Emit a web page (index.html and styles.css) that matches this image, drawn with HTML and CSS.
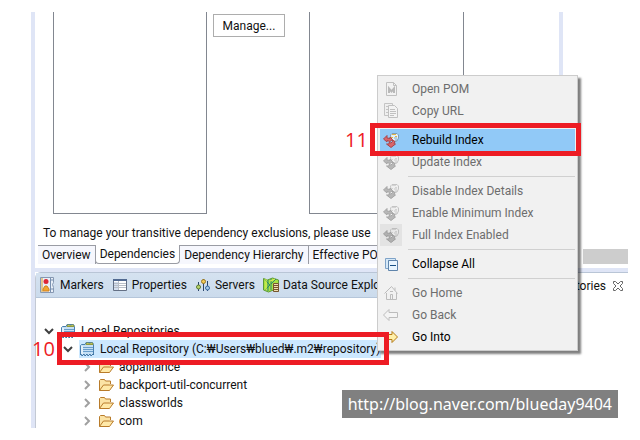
FILE: index.html
```html
<!DOCTYPE html>
<html lang="en">
<head>
    <meta charset="UTF-8">
    <meta name="viewport" content="width=device-width, initial-scale=1.0">
    <title>Maven Repositories</title>
    <link rel="stylesheet" href="styles.css">
</head>
<body>
    <!-- Shared icons -->
    <svg class="icon-defs" aria-hidden="true">
        <symbol id="icon-down" viewBox="0 0 10 16">
            <path d="M1 6l4 4 4-4" fill="none" stroke="#404040" stroke-width="2"/>
        </symbol>
        <symbol id="icon-right" viewBox="0 0 10 16">
            <path d="M3 4l4 4-4 4" fill="none" stroke="#a0a0a0" stroke-width="2"/>
        </symbol>
        <symbol id="icon-repo" viewBox="0 0 16 16">
            <path d="M1.500 13.500V4.500l1-1h3.500l1-2h6.500l1 2v10" fill="#c5e0f5" stroke="#4a7fae"/>
            <path d="M1 14l1-1 1 2 2-2 1 2 2-2 1 2 2-2 1 2 2-2 1 1" fill="none" stroke="#3f75a5"/>
            <path d="M7 3.500l.5-1.500h2l1 1 1-1h2l.5 1.500z" fill="#f4e88b" stroke="#8d9a3c"/>
            <path d="M4 6.500h10M4 8.500h10M4 10.500h10" stroke="#6a9ecb"/>
            <path d="M3 5v8" stroke="#fff"/>
        </symbol>
        <symbol id="icon-folder" viewBox="0 0 16 16">
            <path d="M1.500 13.500v-10l1-1h4l1 1.500h5v3" fill="#fbe3a5" stroke="#b87b2a"/>
            <path d="M1.500 13.500l4-5.500h10l-4 5.500z" fill="#ffe9a8" stroke="#b87b2a"/>
        </symbol>
        <symbol id="icon-index" viewBox="0 0 16 16">
            <path d="M7.500 3l1.500-1.500h5l1.500 1.500v3l-1.500 3-3 .5-3-2z" fill="#e4f0f8" stroke="#7f9db5"/>
            <path d="M9 2.500h4M8 5.500h2M12 4.500h2" stroke="#dfb649"/>
            <path d="M11 6h3M12 8h2" stroke="#7fa6c8"/>
            <path d="M.5 7L4 3.500V6l3 .5V5l2.500 2.500L7 9.500 4 8.500V10z" fill="#d9656a" stroke="#a8454c"/>
            <path d="M3.500 12H6v-1.500l2 .5 1.500-1.500V8L12 9.500l-1 2.500h1.500L8 15.500z" fill="#d9656a" stroke="#a8454c"/>
        </symbol>
    </svg>

    <main class="workbench">
        <section class="editor">
            <div class="editor-page">
                <div class="lists">
                    <div class="list-box"></div>
                    <button class="manage-btn" type="button">Manage...</button>
                    <div class="list-box"></div>
                </div>
                <p class="message">To manage your transitive dependency exclusions, please use</p>
                <nav class="page-tabs">
                    <button type="button">Overview</button>
                    <button type="button" class="selected">Dependencies</button>
                    <button type="button">Dependency Hierarchy</button>
                    <button type="button">Effective POM</button>
                </nav>
            </div>
            <div class="outline">
                <div class="scroll-thumb"></div>
            </div>
        </section>

        <section class="view">
            <div class="view-tabs">
                <button type="button" class="view-tab">
                    <svg class="icon" viewBox="0 0 16 16">
                        <path d="M.5.5h13v5l-1 2 1 3v5h-13z" fill="#e8eff8" stroke="#8698b2"/>
                        <path d="M1 1h2v14H1z" fill="#e2c98f"/>
                        <path d="M10.500 1v14M11 3h2M11 12h2" stroke="#7890b0"/>
                        <circle cx="6" cy="4.500" r="2.500" fill="#dd2635"/>
                        <path d="M3 14v-2l2-3h2l2 3v2z" fill="#f3a62c" stroke="#d08222"/>
                    </svg>
                    Markers
                </button>
                <button type="button" class="view-tab">
                    <svg class="icon" viewBox="0 0 16 16">
                        <path d="M1.500 2.500h13v11h-13z" fill="#fff" stroke="#647085"/>
                        <path d="M1 2h14v2h-14z" fill="#526a91"/>
                        <path d="M2 5h4v8h-4z" fill="#d4dfef"/>
                        <path d="M6.500 4v9M2 6.500h12M2 8.500h12M2 10.500h12" stroke="#b9bfc8"/>
                    </svg>
                    Properties
                </button>
                <button type="button" class="view-tab">
                    <svg class="icon" viewBox="0 0 16 16">
                        <path d="M3.500 5v9M8.500 2v12M12.500 4v10" stroke="#2c466b"/>
                        <circle cx="3.500" cy="10" r="2" fill="#b9d56c" stroke="#5a7a31"/>
                        <circle cx="8.500" cy="4.500" r="2" fill="#f2cc58" stroke="#9b7620"/>
                        <circle cx="12.500" cy="11" r="2" fill="#a8cbea" stroke="#3769a1"/>
                    </svg>
                    Servers
                </button>
                <button type="button" class="view-tab">
                    <svg class="icon" viewBox="0 0 16 16">
                        <path d="M.5 1.500l4 1.500 5-2 6 2v11l-5-1-5 2-5-2z" fill="#a8e244" stroke="#5c983a"/>
                        <path d="M2 3l5 5-5 5M5 3v11M8 2v11M13 2L8 7" fill="none" stroke="#2c8b69"/>
                        <path d="M3 2v11M7 4l5-2" stroke="#dff153"/>
                        <path d="M10.500 6.500h5v8h-5z" fill="#f0dfb2" stroke="#76552e"/>
                        <path d="M11 8.500h4M11 10.500h4M11 12.500h4" stroke="#76552e"/>
                    </svg>
                    Data Source Explorer
                </button>
                <button type="button" class="view-tab active">
                    <span>Maven Repositories</span>
                    <svg class="close" viewBox="0 0 12 12">
                        <path d="M1.500 1.500h2l2.500 2.500 2.500-2.500h2v2l-2.500 2.500 2.500 2.500v2h-2l-2.500-2.500-2.500 2.500h-2v-2l2.500-2.500-2.500-2.500z" fill="#fff" stroke="#666"/>
                    </svg>
                </button>
            </div>

            <ul class="tree">
                <li>
                    <div class="row"><svg class="twisty"><use href="#icon-down"/></svg><svg class="icon"><use href="#icon-repo"/></svg><span>Local Repositories</span></div>
                    <ul>
                        <li>
                            <div class="row selected"><svg class="twisty"><use href="#icon-down"/></svg><svg class="icon"><use href="#icon-repo"/></svg><span>Local Repository (C:₩Users₩blued₩.m2₩repository)</span></div>
                            <ul>
                                <li class="row"><svg class="twisty"><use href="#icon-right"/></svg><svg class="icon"><use href="#icon-folder"/></svg><span>aopalliance</span></li>
                                <li class="row"><svg class="twisty"><use href="#icon-right"/></svg><svg class="icon"><use href="#icon-folder"/></svg><span>backport-util-concurrent</span></li>
                                <li class="row"><svg class="twisty"><use href="#icon-right"/></svg><svg class="icon"><use href="#icon-folder"/></svg><span>classworlds</span></li>
                                <li class="row"><svg class="twisty"><use href="#icon-right"/></svg><svg class="icon"><use href="#icon-folder"/></svg><span>com</span></li>
                            </ul>
                        </li>
                    </ul>
                </li>
            </ul>
        </section>
    </main>

    <!-- Context menu -->
    <div class="context-menu">
        <button type="button" disabled>
            <svg class="icon" viewBox="0 0 16 16">
                <path d="M3.500 1.500h7l3 3v10h-10z" fill="#f4f4f4" stroke="#909090"/>
                <path d="M10.500 1.500v3h3" fill="none" stroke="#909090"/>
                <path d="M6 12V7.500l2.500 3 2.500-3V12" fill="none" stroke="#808080" stroke-width="2"/>
            </svg>
            Open POM
        </button>
        <button type="button" disabled>
            <svg class="icon" viewBox="0 0 16 16">
                <path d="M1.500.5h8v12h-8z" fill="#eee" stroke="#999"/>
                <path d="M3 3.500h2M3 6.500h2M3 9.500h2" stroke="#999"/>
                <path d="M5.500 2.500h6l3 3v9h-9z" fill="#f5f5f5" stroke="#909090"/>
                <path d="M7 6.500h5M7 8.500h6M7 10.500h6M7 12.500h4" stroke="#909090"/>
            </svg>
            Copy URL
        </button>
        <hr>
        <button type="button" class="highlight"><svg class="icon"><use href="#icon-index"/></svg>Rebuild Index</button>
        <button type="button" disabled><svg class="icon"><use href="#icon-index"/></svg>Update Index</button>
        <hr>
        <button type="button" disabled><svg class="icon"><use href="#icon-index"/></svg>Disable Index Details</button>
        <button type="button" disabled><svg class="icon"><use href="#icon-index"/></svg>Enable Minimum Index</button>
        <button type="button" class="checked" disabled><svg class="icon"><use href="#icon-index"/></svg>Full Index Enabled</button>
        <hr>
        <button type="button">
            <svg class="icon" viewBox="0 0 16 16">
                <path d="M2.500 12.500v-10h10v2h-7v8z" fill="#d6e9f8" stroke="#7fa3c8"/>
                <path d="M5.500 4.500h9v10h-9z" fill="#e8f5ff" stroke="#5f84ab"/>
                <path d="M7 9.500h6" stroke="#174f85"/>
            </svg>
            Collapse All
        </button>
        <hr>
        <button type="button" disabled>
            <svg class="icon" viewBox="0 0 16 16">
                <path d="M3.500 8v6.500h10V8M1.500 8.500L8.500 1.500l6 7" fill="#f2f2f2" stroke="#888"/>
                <path d="M12 2.500v3M7.500 14V9.500h2V14M7 6.500h3" fill="none" stroke="#888"/>
            </svg>
            Go Home
        </button>
        <button type="button" disabled>
            <svg class="icon" viewBox="0 0 16 16">
                <path d="M.5 8L6 2.500v3h8.500v5H6v3z" fill="#f7f7f7" stroke="#888"/>
            </svg>
            Go Back
        </button>
        <button type="button">
            <svg class="icon" viewBox="0 0 16 16">
                <path d="M14.500 8L9 2.500v3H1.500v5H9v3z" fill="#fff0aa" stroke="#b57b15"/>
            </svg>
            Go Into
        </button>
    </div>

    <!-- Step callouts -->
    <div class="frame frame-10"></div>
    <span class="step step-10">10</span>
    <div class="frame frame-11"></div>
    <span class="step step-11">11</span>

    <a class="watermark" href="#">http://blog.naver.com/blueday9404</a>
</body>
</html>
```

FILE: styles.css
```css
* {
    box-sizing: border-box;
}

body {
    position: relative;
    margin: 0;
    padding: 12px 12px 12px 31px;
    background: #fff;
    color: #111;
    font-family: Roboto, "Noto Sans CJK KR", sans-serif;
    font-size: 12px;
    line-height: 18px;
}

button {
    margin: 0;
    padding: 0;
    border: none;
    background: none;
    color: inherit;
    font: inherit;
    text-align: left;
    white-space: nowrap;
}

ul {
    margin: 0;
    padding: 0;
    list-style: none;
}

.icon-defs {
    position: absolute;
    width: 0;
    height: 0;
}

.icon {
    flex: none;
    width: 16px;
    height: 16px;
}

.workbench {
    border-left: 4px solid #dfe5f6;
    overflow: hidden;
}

/* Editor */
.editor {
    display: flex;
    border-bottom: 4px solid #dfe5f6;
}

.editor-page {
    flex: none;
    width: 528px;
    padding-bottom: 4px;
    border-right: 4px solid #dfe5f6;
}

.lists {
    display: grid;
    grid-template-columns: 154px 102px 155px;
    align-items: start;
    padding-left: 18px;
}

.list-box {
    height: 202px;
    border: 1px solid #828790;
    border-top: none;
}

.manage-btn {
    width: 72px;
    height: 23px;
    margin: 2px 0 0 6px;
    border: 1px solid #adadad;
    text-align: center;
}

.message {
    margin: 10px 0 3px;
    padding-left: 8px;
}

.page-tabs {
    display: flex;
    margin-left: 3px;
    border-top: 1px solid #9a9ca4;
    background: #f6f7fd;
}

.page-tabs button {
    height: 18px;
    padding: 0 4px;
    border-right: 1px solid #9a9ca4;
}

.page-tabs .selected {
    margin: -1px 0 0 -1px;
    height: 19px;
    border: 1px solid #9a9ca4;
    border-top: none;
    border-radius: 0 0 4px 4px;
    background: #fff;
}

.outline {
    display: flex;
    flex: 1;
    align-items: flex-end;
    padding: 0 0 4px 20px;
}

.scroll-thumb {
    flex: 1;
    height: 15px;
    background: #cdcdcd;
}

/* Bottom view */
.view {
    border-top: 1px solid #b9c5d6;
    border-left: 1px solid #c3c9d4;
    border-top-left-radius: 6px;
}

.view-tabs {
    display: flex;
    height: 25px;
    border-bottom: 1px solid #b5c6da;
    background: linear-gradient(#d5e2f0, #cbdbec);
}

.view-tab {
    display: flex;
    align-items: center;
    gap: 4px;
    padding: 0 4px;
}

.view-tab.active {
    flex: 1;
    justify-content: flex-end;
    height: 25px;
    background: #fff;
}

.close {
    width: 12px;
    height: 12px;
    margin-left: 2px;
}

.tree {
    margin-bottom: -2px;
    padding: 24px 0 0 8px;
}

.tree ul {
    padding-left: 19px;
}

.row {
    display: flex;
    align-items: center;
    gap: 4px;
    height: 18px;
    white-space: nowrap;
}

.row span {
    padding-left: 1px;
}

.twisty {
    flex: none;
    width: 10px;
    height: 16px;
    margin-right: 2px;
}

.row.selected {
    width: 318px;
    background: linear-gradient(90deg, #fff 16px, #cce8ff 16px);
}

/* Context menu */
.context-menu {
    position: absolute;
    top: 75px;
    left: 377px;
    width: 201px;
    padding: 2px;
    border: 1px solid #ccc;
    background: #f1f1f1;
    box-shadow: 3px 3px 2px rgba(0, 0, 0, 0.5);
}

.context-menu button {
    display: flex;
    align-items: center;
    gap: 13px;
    width: 100%;
    height: 22px;
    padding-left: 3px;
    color: #000;
}

.context-menu button:disabled {
    color: #6d6d6d;
}

.context-menu .highlight {
    background: #91c9f7;
}

.context-menu .checked {
    background: linear-gradient(90deg, #e3e3e3 22px, transparent 22px);
}

.context-menu hr {
    height: 1px;
    margin: 3px 0 3px 28px;
    border: none;
    background: #d0d0d0;
}

.context-menu button:disabled .icon {
    filter: grayscale(1);
    opacity: 0.5;
}

/* Step callouts */
.frame {
    position: absolute;
    height: 33px;
    border: 5px solid #ed1c24;
}

.frame-10 {
    top: 332px;
    left: 57px;
    width: 332px;
}

.frame-11 {
    top: 123px;
    left: 370px;
    width: 211px;
}

.step {
    position: absolute;
    color: #ed1c24;
    font-family: "Open Sans", sans-serif;
    font-size: 20px;
    line-height: 24px;
}

.step-10 {
    top: 337px;
    left: 32px;
}

.step-11 {
    top: 128px;
    left: 345px;
}

.watermark {
    position: absolute;
    top: 390px;
    right: 22px;
    padding: 0 6px;
    background: #808080;
    color: #fff;
    font-family: "Noto Sans", sans-serif;
    font-size: 16px;
    line-height: 28px;
    text-decoration: none;
}
```
